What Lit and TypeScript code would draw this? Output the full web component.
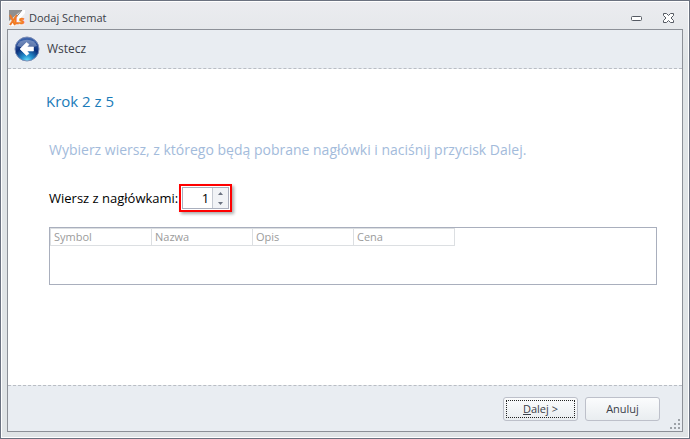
import { LitElement, html, css, svg } from "lit";
import { customElement, property } from "lit/decorators.js";

@customElement("app-root")
export class AppRoot extends LitElement {
  @property({ type: Array }) columns = ["Symbol", "Nazwa", "Opis", "Cena"];

  static styles = css`
    :host {
      display: block;
      font-family: "Open Sans", "Noto Sans", sans-serif;
      font-size: 11px;
      line-height: 16px;
      color: #3b4048;
    }
    * {
      box-sizing: border-box;
    }
    .window {
      display: flex;
      flex-direction: column;
      min-height: 100vh;
      padding: 0 5px 5px;
      border: 1px solid #6b7280;
      box-shadow: inset 0 0 0 1px #fff;
      background: linear-gradient(#ebecf0, #e0e4e6 60px);
    }
    .titlebar {
      display: flex;
      align-items: center;
      gap: 4px;
      height: 28px;
      padding: 6px 9px 0 3px;
    }
    .title {
      flex: 1;
      margin: 0;
      font-size: 11px;
      font-weight: 400;
    }
    .caption {
      display: flex;
      width: 12px;
      height: 12px;
      padding: 0;
      border: 0;
      background: none;
    }
    .caption.min {
      margin-right: 16px;
    }
    svg {
      display: block;
    }
    .client {
      position: relative;
      flex: 1;
      display: flex;
      flex-direction: column;
      margin: 0 1px 1px;
      border: 1px solid #8c9097;
      background: #fff;
    }
    .nav {
      height: 39px;
      padding: 6px;
      background: #e9edf2;
      border-bottom: 1px dashed #b9bdc4;
    }
    .back {
      display: flex;
      align-items: center;
      gap: 7px;
      padding: 0;
      border: 0;
      background: none;
      font: inherit;
      font-size: 12px;
      color: inherit;
    }
    .content {
      flex: 1;
      padding: 20px 25px 24px 38px;
    }
    .step {
      margin: 0;
      font-size: 15px;
      line-height: 24px;
      font-weight: 400;
      color: #1a7bb9;
    }
    .body {
      padding-left: 3px;
    }
    .hint {
      margin: 25px 0 0;
      font-size: 14px;
      line-height: 24px;
      color: #a3bbdb;
    }
    .field {
      display: flex;
      align-items: center;
      gap: 1px;
      margin-top: 22px;
      font-size: 13px;
      color: #000;
    }
    .spin {
      display: flex;
      width: 53px;
      height: 28px;
      padding: 1px;
      border: 2px solid #f00;
      box-shadow: 2px 2px 3px #0005;
      background: #fff;
    }
    .box {
      flex: 1;
      min-width: 0;
      display: flex;
      border: 1px solid #a9afbd;
    }
    .spin input {
      flex: 1;
      min-width: 0;
      width: 100%;
      padding: 0 3px;
      border: 0;
      outline: 0;
      background: none;
      font: inherit;
      text-align: right;
      color: #000;
    }
    .arrows {
      flex: none;
      display: flex;
      flex-direction: column;
      width: 16px;
      border-left: 1px solid #c5cad2;
    }
    .arrows button {
      flex: 1;
      display: grid;
      place-items: center;
      padding: 0;
      border: 0;
      background: #f1f3f6;
    }
    .grid {
      height: 58px;
      margin-top: 15px;
      border: 1px solid #a9afbd;
    }
    table {
      border-collapse: separate;
      border-spacing: 0;
      table-layout: fixed;
      width: 405px;
      border-left: 1px solid #dcdfe2;
    }
    th {
      height: 18px;
      padding: 0 3px;
      border: 1px solid #dcdfe2;
      border-left-width: 0;
      text-align: left;
      font-size: 11px;
      line-height: 16px;
      font-weight: 400;
      color: #9b9b9b;
    }
    .footer {
      display: flex;
      justify-content: flex-end;
      gap: 7px;
      height: 46px;
      padding: 11px 22px 9px;
      background: #e9edf2;
      border-top: 1px dashed #b9bdc4;
    }
    .btn {
      width: 75px;
      height: 24px;
      padding: 0;
      border: 1px solid #bdc0ca;
      border-radius: 3px;
      background: linear-gradient(#fbfcfd, #e9edf0);
      font: inherit;
      color: #3b4048;
    }
    .btn.focus {
      padding: 2px;
    }
    .btn.focus span {
      display: block;
      height: 18px;
      border: 1px dotted #222;
      line-height: 16px;
    }
    .grip {
      position: absolute;
      right: 1px;
      bottom: 1px;
    }
  `;

  private logo() {
    return svg`<svg width="16" height="16" viewBox="0 0 16 16" aria-hidden="true">
      <rect width="16" height="16" fill="#ededed"/>
      <path d="M0 0h13L0 11z" fill="#8f8f8f"/>
      <path d="M16 0v3L5 16H0L13 0z" fill="#fff"/>
      <path d="M13 0L1 15" stroke="#777" stroke-width="1"/>
      <path d="M1 5l5 10M8 5L1 15" stroke="#ef7a2a" stroke-width="2"/>
      <text x="5" y="14" font-size="9" font-weight="800" fill="#f47b20" stroke="#f47b20" stroke-width=".5">LS</text>
    </svg>`;
  }

  private backIcon() {
    return svg`<svg width="26" height="26" viewBox="0 0 26 26" aria-hidden="true">
      <defs>
        <radialGradient id="orb" cx=".5" cy="1" r=".95">
          <stop offset="0" stop-color="#6fe8ff"/><stop offset=".25" stop-color="#2592cf"/>
          <stop offset=".6" stop-color="#0b2f7a"/><stop offset="1" stop-color="#3f66ad"/>
        </radialGradient>
      </defs>
      <circle cx="13" cy="13" r="12" fill="url(#orb)" stroke="#7b8cb5"/>
      <path d="M3 10a10.500 9 0 0 1 20 0q-10 4-20 0z" fill="#fff" opacity=".3"/>
      <path d="M6 13l6.500-6.500 2.500 2-2 2.500h6.500v4H13l2 2.500-2.500 2z" fill="#fff" stroke="#fff" stroke-width=".6" stroke-linejoin="round"/>
    </svg>`;
  }

  render() {
    return html`
      <main class="window">
        <header class="titlebar">
          ${this.logo()}
          <h1 class="title">Dodaj Schemat</h1>
          <button class="caption min" aria-label="Minimalizuj">
            <svg width="12" height="12"><rect x=".5" y="4.500" width="10" height="4" rx="1" fill="#fff" stroke="#555a63"/></svg>
          </button>
          <button class="caption" aria-label="Zamknij">
            <svg width="12" height="12"><path d="M.5 1.500h3l2 2 2-2h3v2l-2.500 2.500 2.500 2.500v2h-3l-2-2-2 2h-3v-2l2.500-2.500-2.500-2.500z" fill="#fff" stroke="#555a63"/></svg>
          </button>
        </header>
        <section class="client">
          <nav class="nav">
            <button class="back">${this.backIcon()}Wstecz</button>
          </nav>
          <div class="content">
            <h2 class="step">Krok 2 z 5</h2>
            <div class="body">
              <p class="hint">Wybierz wiersz, z którego będą pobrane nagłówki i naciśnij przycisk Dalej.</p>
              <div class="field">
                <label for="row">Wiersz z nagłówkami:</label>
                <div class="spin">
                  <div class="box">
                    <input id="row" type="text" inputmode="numeric" value="1" />
                    <div class="arrows">
                      <button aria-label="Zwiększ"><svg width="5" height="3"><path d="M0 3L2.500 0 5 3z" fill="#6b7280"/></svg></button>
                      <button aria-label="Zmniejsz"><svg width="5" height="3"><path d="M0 0h5L2.500 3z" fill="#6b7280"/></svg></button>
                    </div>
                  </div>
                </div>
              </div>
              <div class="grid">
                <table>
                  <thead><tr>${this.columns.map((c) => html`<th scope="col">${c}</th>`)}</tr></thead>
                </table>
              </div>
            </div>
          </div>
          <footer class="footer">
            <button class="btn focus"><span><u>D</u>alej &gt;</span></button>
            <button class="btn">Anuluj</button>
          </footer>
          <svg class="grip" width="11" height="11" aria-hidden="true">
            <path d="M8 0h2v2h-2zM4 4h2v2H4zM8 4h2v2H8zM0 8h2v2H0zM4 8h2v2H4zM8 8h2v2H8z" fill="#9da2a8"/>
          </svg>
        </section>
      </main>
    `;
  }
}
